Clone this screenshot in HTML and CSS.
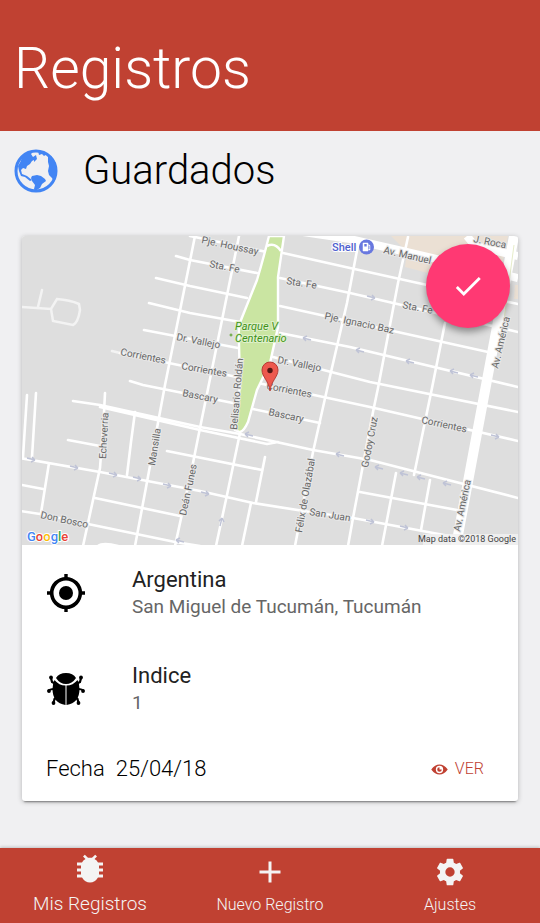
FILE: index.html
```html
<!DOCTYPE html>
<html lang="es">
<head>
<meta charset="utf-8">
<meta name="viewport" content="width=device-width, initial-scale=1">
<title>Registros</title>
<link rel="stylesheet" href="styles.css">
</head>
<body>
<header class="header"><h1>Registros</h1></header>
<main class="content">
  <div class="section-title">
    <svg class="globe" viewBox="0 0 44 44" aria-hidden="true">
      <circle cx="22" cy="22" r="20" fill="none" stroke="#4285f4" stroke-width="3"/>
      <path fill="#4285f4" d="M8 9Q13 3 20 2l-3 3 2 3 3-2 1 4-3 3 0-2-2 1-2 3-3 2-1 3-3-1-2 2 1 4 5 2 5 4-2 1-5-4-4-1-2-5-1-5Q7 12 8 9z"/>
      <path fill="#4285f4" d="M18 27l5-1 4 1 4 3 1 2-4 3-2 4-5 3-1-2 1-4-3-4-1-3z"/>
      <path fill="#4285f4" d="M24 2l1 4 3-1 2 2 3-2-2-2zM34 7l3 0q6 7 6 15l-3 11-2-4-3-3-1-4 1-5-1-4z"/>
    </svg>
    <h2>Guardados</h2>
  </div>
  <article class="card">
    <svg class="map" viewBox="22 236 496 309" role="img" aria-label="Mapa">
      <rect x="22" y="236" width="496" height="309" fill="#dedede"/>
      <path fill="#ebe0d4" d="M391 236H508L500 274 428 273 405 267 407 252zM515 285h3v14h-4z"/>
      <g fill="none" stroke="#f3f3f3" stroke-width="2.5" stroke-linecap="round">
        <path d="M22 307l29 2 6-10q13 1 22 5l1 6q-2 13-7 15l-20-4-2-12M42 290l-4 17M112 351l8 2"/>
      </g>
      <g fill="none" stroke="#fff" stroke-width="2.6" stroke-linecap="round" stroke-linejoin="round">
        <path d="M195 236L165 385 147 482 135 546M239 236L220 330 200 428 192 468 175 546M105 393l-1 20-4 55-17 78M135 412l-4 30-4 33M240 433L227 495 216 546M265 457l-9 45M251 503l-9 43M359 240L347 303 328 385 313 452 295 546M408 237L398 283 378 388 373 412 363 465 353 518 348 546M445 323L432 388 414 475M396 473l-14 73M430 480l-9 50"/>
        <path d="M190 236L267 252M176 256L190 260 257 273M156 278L190 286 247 298M149 303L190 313 240 322M144 330L238 348M120 353L237 377M130 381L143 385 233 403"/>
        <path d="M283 253L350 268 427 285 518 304M280 278L350 293 518 332M280 306L488 352M280 333L350 347 518 387M273 357L370 382 518 412M258 383L370 407 518 441M253 409L320 423"/>
        <path d="M73 401L100 405 200 427 240 434 313 450 370 460 518 498M100 407L200 430 267 444 278 442M20 458L100 472 200 491 253 503 310 512 353 518 460 538M167 451L262 470M68 440l32 6M95 498L180 516M20 511l20 3 48 10 87 18 25 4M49 463l-8 50M22 485l21 4M27 395l-4 62M36 393l-4 64M360 492l97 18M98 546q5-4 20 0"/>
      </g>
      <path d="M296 231L350 239 398 250 518 278M467 236l8 10 43 10" fill="none" stroke="#fff" stroke-width="8"/>
      <path d="M514 236L487 380 478 428 456 546" fill="none" stroke="#fff" stroke-width="10"/>
      <path d="M514 245l-10 75" stroke="#e6ecc9" stroke-width="1" fill="none"/>
      <path d="M269 236H284L278 277 278 327 270 363 257 390 248 422Q244 431 240 432L235 430 240 385 239 343Q238 328 241 320L257 280Q263 260 269 236z" fill="#cae5a2" stroke="#fff" stroke-width="2.4"/>
      <path d="M267 246q8-4 14 5" fill="none" stroke="#fff" stroke-width="2.6"/>
      <g stroke="#bfc3d6" stroke-width="1.4" fill="none">
        <path id="left" d="M303 338l8 2m-8-2l4-2m-4 2l3 3"/>
        <use href="#left" x="53" y="12"/><use href="#left" x="103" y="23"/><use href="#left" x="147" y="33"/><use href="#left" x="167" y="37"/>
        <use href="#left" x="-58" y="96"/><use href="#left" x="33" y="116"/><use href="#left" x="72" y="129"/><use href="#left" x="97" y="135"/><use href="#left" x="114" y="139"/><use href="#left" x="140" y="145"/><use href="#left" x="-127" y="202"/>
        <path id="right" d="M27 458l8 2m0 0l-3-3m3 3l-4 2"/>
        <use href="#right" x="43" y="8"/><use href="#right" x="82" y="15"/><use href="#right" x="106" y="19"/><use href="#right" x="136" y="26"/><use href="#right" x="174" y="34"/><use href="#right" x="339" y="62"/><use href="#right" x="373" y="68"/><use href="#right" x="464" y="-23"/><use href="#right" x="340" y="-162"/>
        <path d="M220 526l2-8m0 0l-3 3m3-3l2 4"/>
      </g>
      <g class="streets">
        <text transform="translate(201 243) rotate(12)">Pje. Houssay</text>
        <text transform="translate(209 267) rotate(11)">Sta. Fe</text>
        <text transform="translate(286 284) rotate(9)">Sta. Fe</text>
        <text transform="translate(383 253) rotate(13)">Av. Manuel</text>
        <text transform="translate(473 242) rotate(11)">J. Roca</text>
        <text transform="translate(402 308) rotate(11)">Sta. Fe</text>
        <text transform="translate(324 319) rotate(12)">Pje. Ignacio Baz</text>
        <text transform="translate(176 340) rotate(11)">Dr. Vallejo</text>
        <text transform="translate(120 355) rotate(11)">Corrientes</text>
        <text transform="translate(181 369) rotate(10)">Corrientes</text>
        <text transform="translate(277 363) rotate(11)">Dr. Vallejo</text>
        <text transform="translate(266 389) rotate(11)">Corrientes</text>
        <text transform="translate(182 396) rotate(11)">Bascary</text>
        <text transform="translate(268 415) rotate(12)">Bascary</text>
        <text transform="translate(421 423) rotate(12)">Corrientes</text>
        <text transform="translate(309 515) rotate(9)">San Juan</text>
        <text transform="translate(40 518) rotate(12)">Don Bosco</text>
        <text transform="translate(106 459) rotate(-87)">Echeverria</text>
        <text transform="translate(155 466) rotate(-81)">Mansilla</text>
        <text transform="translate(186 516) rotate(-78)">Deán Funes</text>
        <text transform="translate(237 430) rotate(-85)">Belisario Roldán</text>
        <text transform="translate(302 533) rotate(-80)">Félix de Olazábal</text>
        <text transform="translate(368 468) rotate(-79)">Godoy Cruz</text>
        <text transform="translate(498 369) rotate(-77)">Av. América</text>
        <text transform="translate(460 532) rotate(-78)">Av. América</text>
      </g>
      <g class="park"><text x="235" y="330">Parque V</text><text x="235" y="342">Centenario</text></g>
      <circle cx="231" cy="335" r="1" fill="none" stroke="#55a024"/>
      <text class="shell" x="332" y="251">Shell</text>
      <circle cx="366.500" cy="247" r="7.500" fill="#6878df"/>
      <path d="M363 243h5v8h-5zM368.500 244.500l1.500 1v4.500h-1.500" fill="#fff" stroke="#fff" stroke-width=".5"/><path d="M364.300 244h2.400v2.500h-2.400zM368.600 246h.8v3h-.8z" fill="#6878df"/>
      <path d="M270 391c-1-10-8-14-8-21a8 8 0 0 1 16 0c0 7-7 11-8 21z" fill="#ed594e" stroke="#b63b34"/>
      <circle cx="270" cy="370.500" r="2.700" fill="#541713"/>
      <text class="google" x="27" y="541"><tspan fill="#4285f4">G</tspan><tspan fill="#ea4335">o</tspan><tspan fill="#fbbc05">o</tspan><tspan fill="#4285f4">g</tspan><tspan fill="#34a853">l</tspan><tspan fill="#ea4335">e</tspan></text>
      <rect x="423" y="534" width="95" height="11" fill="#f1f1f1" opacity=".85"/>
      <text class="credit" x="516" y="542" text-anchor="end">Map data ©2018 Google</text>
    </svg>
    <button class="fab" type="button" aria-label="Confirmar">
      <svg viewBox="0 0 24 24" aria-hidden="true"><path fill="#fff" d="M9 16.170L4.830 12l-1.420 1.410L9 19 21 7l-1.410-1.410z"/></svg>
    </button>
    <div class="item">
      <svg class="item-icon" viewBox="0 0 40 40" aria-hidden="true">
        <circle cx="20" cy="20" r="14.300" fill="none" stroke="#000" stroke-width="3.600"/><circle cx="20" cy="20" r="7"/>
        <path d="M18.300 1h3.400v5h-3.400zM18.300 34h3.400v5h-3.400zM1 18.300h5v3.400H1zM34 18.300h5v3.400h-5z"/>
      </svg>
      <div><h3>Argentina</h3><p>San Miguel de Tucumán, Tucumán</p></div>
    </div>
    <div class="item">
      <svg class="item-icon" viewBox="0 0 40 40" aria-hidden="true">
        <path d="M10 9Q13 4 20 4T30 9q-4 6-10 6T10 9zM8.500 11Q13 16.500 19.500 16.500V36Q6.500 34 6.500 20q0-5 2-9zM31.500 11Q27 16.500 20.500 16.500V36Q33.500 34 33.500 20q0-5-2-9z"/>
        <g fill="none" stroke="#000" stroke-width="2.200" stroke-linecap="round"><path d="M5 9l1 4 4 2M35 9l-1 4-4 2M2.500 22q1-2 6-2M37.500 22q-1-2-6-2M7.500 34l1-4 3-2M32.500 34l-1-4-3-2"/></g>
        <circle cx="5" cy="8.500" r="1.900"/><circle cx="35" cy="8.500" r="1.900"/><circle cx="3" cy="22" r="1.900"/><circle cx="37" cy="22" r="1.900"/><circle cx="7.500" cy="34" r="1.900"/><circle cx="32.500" cy="34" r="1.900"/>
      </svg>
      <div><h3>Indice</h3><p>1</p></div>
    </div>
    <div class="card-footer">
      <p class="date"><span>Fecha</span><span>25/04/18</span></p>
      <button class="view" type="button">
        <svg viewBox="0 0 18 12" aria-hidden="true"><path fill="#c04132" fill-rule="evenodd" d="M0 6Q4 .5 9 .5T18 6q-4 5.500-9 5.500T0 6zM9 2a4 4 0 1 0 0 8 4 4 0 0 0 0-8zm0 1.500A2.500 2.500 0 1 0 11.500 6H9z"/></svg>
        VER
      </button>
    </div>
  </article>
</main>
<nav class="tabs">
  <a class="tab active" href="#registros">
    <svg viewBox="0 0 30 30" aria-hidden="true"><path fill="#f4f4f4" d="M8 2.500L9.800.7 13 3.800h4L20.200.7 22 2.500l-2.500 2.600Q22 6.500 23 8.500h5v3h-4v3h4v3h-4v3h4v3h-5Q20 28.500 15 28.500t-8-5H2v-3h4v-3H2v-3h4v-3H2v-3h5q1-2 3.500-3.400z"/></svg>
    <span>Mis Registros</span>
  </a>
  <a class="tab" href="#nuevo">
    <svg viewBox="0 0 32 32" aria-hidden="true"><path d="M16 5.500v21M5.500 16h21" stroke="#f4f4f4" stroke-width="3"/></svg>
    <span>Nuevo Registro</span>
  </a>
  <a class="tab" href="#ajustes">
    <svg viewBox="0 0 24 24" aria-hidden="true"><path fill="#f4f4f4" d="M19.430 12.980c.04-.32.07-.64.07-.98s-.03-.66-.07-.98l2.110-1.650c.19-.15.24-.42.12-.64l-2-3.460c-.12-.22-.39-.3-.61-.22l-2.490 1c-.52-.4-1.080-.73-1.690-.98l-.38-2.650C14.460 2.180 14.250 2 14 2h-4c-.25 0-.46.18-.49.42l-.38 2.650c-.61.25-1.170.59-1.690.98l-2.490-1c-.23-.09-.49 0-.61.22l-2 3.460c-.13.22-.07.49.12.64l2.110 1.650c-.04.32-.07.65-.07.98s.03.66.07.98l-2.110 1.650c-.19.15-.24.42-.12.64l2 3.460c.12.22.39.3.61.22l2.490-1c.52.4 1.080.73 1.690.98l.38 2.650c.03.24.24.42.49.42h4c.25 0 .46-.18.49-.42l.38-2.650c.61-.25 1.170-.59 1.690-.98l2.490 1c.23.09.49 0 .61-.22l2-3.460c.12-.22.07-.49-.12-.64l-2.110-1.650zM12 15.500A3.500 3.500 0 1 1 12 8.500a3.500 3.500 0 0 1 0 7z"/></svg>
    <span>Ajustes</span>
  </a>
</nav>
</body>
</html>
```
FILE: styles.css
```css
* {
  box-sizing: border-box;
}

body {
  margin: 0;
  min-height: 100vh;
  display: flex;
  flex-direction: column;
  background: #f0f0f2;
  color: #000;
  font-family: Roboto, "Liberation Sans", sans-serif;
  font-weight: 300;
}

h1,
h2,
h3,
p {
  margin: 0;
  font-weight: 300;
}

button {
  padding: 0;
  border: 0;
  font: inherit;
  cursor: pointer;
}

svg {
  display: block;
}

.header {
  padding: 33px 14px 26px;
  background: #c04132;
  color: #fff;
}

.header h1 {
  font-size: 57px;
  line-height: 72px;
}

.content {
  flex: 1;
  padding: 16px 22px 40px;
}

.section-title {
  display: flex;
  align-items: center;
  gap: 25px;
  height: 48px;
  margin: 0 -8px 41px;
}

.globe {
  width: 44px;
  height: 44px;
}

.section-title h2 {
  font-size: 40px;
  line-height: 48px;
}

.card {
  position: relative;
  background: #fff;
  border-radius: 3px;
  box-shadow: 0 3px 2px -2px rgba(0, 0, 0, 0.4), 0 1px 5px rgba(0, 0, 0, 0.25);
}

.map {
  width: 100%;
  height: auto;
  border-radius: 3px 3px 0 0;
}

.streets {
  fill: #666;
  stroke: #e8e8e8;
  stroke-width: 2px;
  paint-order: stroke;
  font-size: 10px;
  font-weight: 400;
}

.park {
  fill: #3f9218;
  stroke: #e0f0cc;
  stroke-width: 2px;
  paint-order: stroke;
  font-size: 11px;
  font-style: italic;
  font-weight: 400;
}

.shell {
  fill: #4d60ce;
  stroke: #fff;
  stroke-width: 2px;
  paint-order: stroke;
  font-size: 11px;
  font-weight: 500;
}

.google {
  stroke: #fff;
  stroke-width: 2px;
  paint-order: stroke;
  font-size: 13px;
  font-weight: 500;
}

.credit {
  fill: #444;
  font-family: Roboto, "Liberation Sans", sans-serif;
  font-size: 9px;
  font-weight: 400;
}

.fab {
  position: absolute;
  top: 8px;
  right: 8px;
  display: grid;
  place-items: center;
  width: 84px;
  height: 84px;
  border-radius: 50%;
  background: #ff3973;
  box-shadow: 0 4px 7px rgba(0, 0, 0, 0.38);
}

.fab svg {
  width: 34px;
  height: 34px;
}

.item {
  display: flex;
  align-items: center;
  gap: 46px;
  height: 96px;
  padding: 0 24px;
}

.item-icon {
  flex: none;
  width: 40px;
  height: 40px;
}

.item h3 {
  color: #222;
  font-size: 22px;
  font-weight: 400;
  line-height: 28px;
}

.item p {
  color: #666;
  font-size: 19px;
  font-weight: 400;
  line-height: 26px;
}

.card-footer {
  display: flex;
  align-items: center;
  justify-content: space-between;
  height: 64px;
  padding: 0 34px 0 24px;
}

.date {
  display: flex;
  gap: 11px;
  font-size: 22px;
  line-height: 28px;
}

.view {
  display: flex;
  align-items: center;
  gap: 7px;
  background: transparent;
  color: #c04132;
  font-size: 16px;
  line-height: 26px;
}

.view svg {
  width: 17px;
  height: 11px;
}

.tabs {
  position: sticky;
  bottom: 0;
  display: grid;
  grid-template-columns: repeat(3, 1fr);
  height: 75px;
  background: #c04132;
  box-shadow: 0 -1px 3px rgba(0, 0, 0, 0.2);
}

.tab {
  display: flex;
  flex-direction: column;
  align-items: center;
  gap: 5px;
  padding-top: 8px;
  color: #f4f4f4;
  font-size: 16px;
  line-height: 24px;
  text-decoration: none;
}

.tab svg {
  width: 32px;
  height: 32px;
}

.tab.active {
  padding-top: 6px;
  gap: 8px;
  font-size: 19px;
}

.tab.active svg {
  width: 30px;
  height: 30px;
}
```
